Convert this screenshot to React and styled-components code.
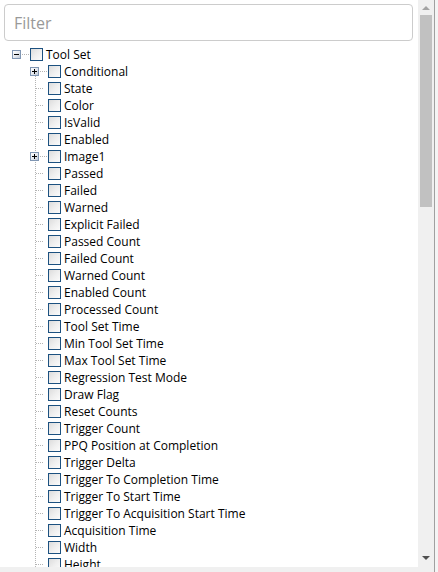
import React from "react";
import styled, { createGlobalStyle } from "styled-components";

const GlobalStyle = createGlobalStyle`
  html, body {
    margin: 0;
    padding: 0;
    background: #ffffff;
  }
  * {
    box-sizing: border-box;
  }
`;

const children = [
  { label: "Conditional", expandable: true },
  { label: "State" },
  { label: "Color" },
  { label: "IsValid" },
  { label: "Enabled" },
  { label: "Image1", expandable: true },
  { label: "Passed" },
  { label: "Failed" },
  { label: "Warned" },
  { label: "Explicit Failed" },
  { label: "Passed Count" },
  { label: "Failed Count" },
  { label: "Warned Count" },
  { label: "Enabled Count" },
  { label: "Processed Count" },
  { label: "Tool Set Time" },
  { label: "Min Tool Set Time" },
  { label: "Max Tool Set Time" },
  { label: "Regression Test Mode" },
  { label: "Draw Flag" },
  { label: "Reset Counts" },
  { label: "Trigger Count" },
  { label: "PPQ Position at Completion" },
  { label: "Trigger Delta" },
  { label: "Trigger To Completion Time" },
  { label: "Trigger To Start Time" },
  { label: "Trigger To Acquisition Start Time" },
  { label: "Acquisition Time" },
  { label: "Width" },
  { label: "Height" },
];

function Expander({ open })
{
  return (
    <ExpanderBox>
      <Glyph>
        <GlyphBar />
        {!open && <GlyphBar $vertical />}
      </Glyph>
    </ExpanderBox>
  );
}

function TreeRow({ level, label, expandable, open })
{
  return (
    <Row $level={level}>
      <Gutter $expandable={expandable} $level={level}>
        {expandable && <Expander open={open} />}
      </Gutter>
      <CheckBox />
      <Label>{label}</Label>
    </Row>
  );
}

function App()
{
  return (
    <>
      <GlobalStyle />
      <Page>
        <MainColumn>
          <FilterWrap>
            <FilterInput placeholder="Filter" />
          </FilterWrap>
          <Tree>
            <TreeRow level={0} label="Tool Set" expandable open />
            <ChildList>
              {children.map((c) => (
                <TreeRow key={c.label} level={1} label={c.label} expandable={c.expandable} />
              ))}
            </ChildList>
          </Tree>
          <HScrollStrip />
        </MainColumn>
        <VScrollbar>
          <ArrowUp />
          <Thumb />
          <ThumbSpacer />
          <ArrowDown />
        </VScrollbar>
        <Edge />
      </Page>
    </>
  );
}

const Page = styled.div`
  display: flex;
  width: 438px;
  height: 572px;
  overflow: hidden;
  background: #ffffff;
`;

const MainColumn = styled.div`
  display: flex;
  flex-direction: column;
  width: 418px;
  height: 100%;
`;

const FilterWrap = styled.div`
  padding: 4px 5px 0 4px;
`;

const FilterInput = styled.input`
  display: block;
  width: 409px;
  height: 37px;
  border: 1px solid #cccccc;
  border-radius: 4px;
  padding: 0 9px;
  font-family: "Open Sans", "Liberation Sans", sans-serif;
  font-size: 16px;
  color: #333;
  outline: none;

  &::placeholder {
    color: #999999;
  }
`;

const Tree = styled.div`
  flex: 1;
  overflow: hidden;
  padding-top: 5px;
  font-family: "Open Sans", "DejaVu Sans", sans-serif;
  font-size: 12px;
  color: #000000;
`;

const ChildList = styled.div`
  background-image: repeating-linear-gradient(to bottom, #b4b4b4 0 1px, transparent 1px 2px);
  background-repeat: no-repeat;
  background-position: 35px 13px;
  background-size: 1px 100%;
`;

const Row = styled.div`
  display: flex;
  align-items: center;
  height: 17px;
  padding-left: ${(p) => (p.$level === 0 ? 12 : 30)}px;
  white-space: nowrap;
`;

const Gutter = styled.div`
  display: flex;
  align-items: center;
  width: 18px;
  height: 17px;
  background-image: repeating-linear-gradient(to right, #b4b4b4 0 1px, transparent 1px 2px);
  background-repeat: no-repeat;
  background-position: ${(p) => (p.$expandable ? "10px" : "6px")} 8px;
  background-size: ${(p) => (p.$expandable ? "7px" : "7px")} 1px;
`;

const ExpanderBox = styled.div`
  display: flex;
  align-items: center;
  justify-content: center;
  width: 9px;
  height: 9px;
  border: 1px solid #8096b3;
  background: linear-gradient(135deg, #ffffff 0%, #e6eaf0 50%, #c2cad6 100%);
`;

const Glyph = styled.div`
  position: relative;
  width: 5px;
  height: 5px;
`;

const GlyphBar = styled.div`
  position: absolute;
  background: #000000;
  ${(p) =>
    p.$vertical
      ? "left: 2px; top: 0; width: 1px; height: 5px;"
      : "left: 0; top: 2px; width: 5px; height: 1px;"}
`;

const CheckBox = styled.div`
  flex: none;
  width: 13px;
  height: 13px;
  border: 1px solid #1c5180;
  background: linear-gradient(135deg, #dcdcdc 0%, #eeeeee 50%, #fbfbfb 100%);
`;

const Label = styled.span`
  margin-left: 3px;
  line-height: 17px;
`;

const HScrollStrip = styled.div`
  flex: none;
  height: 5px;
  background: #f0f0f0;
`;

const VScrollbar = styled.div`
  display: flex;
  flex-direction: column;
  align-items: center;
  width: 16px;
  height: 100%;
  background: #f0f0f0;
`;

const ArrowUp = styled.div`
  flex: none;
  margin: 6px 0 5px;
  width: 0;
  height: 0;
  border-left: 4px solid transparent;
  border-right: 4px solid transparent;
  border-bottom: 4px solid #a3a3a3;
`;

const Thumb = styled.div`
  flex: none;
  width: 12px;
  height: 192px;
  background: #c1c1c1;
`;

const ThumbSpacer = styled.div`
  flex: 1;
`;

const ArrowDown = styled.div`
  flex: none;
  margin: 0 0 12px;
  width: 0;
  height: 0;
  border-left: 4px solid transparent;
  border-right: 4px solid transparent;
  border-top: 4px solid #505050;
`;

const Edge = styled.div`
  flex: none;
  width: 4px;
  height: 100%;
  border-left: 1px solid #a0a0a0;
  background: #f4f4f4;
`;

export default App;
